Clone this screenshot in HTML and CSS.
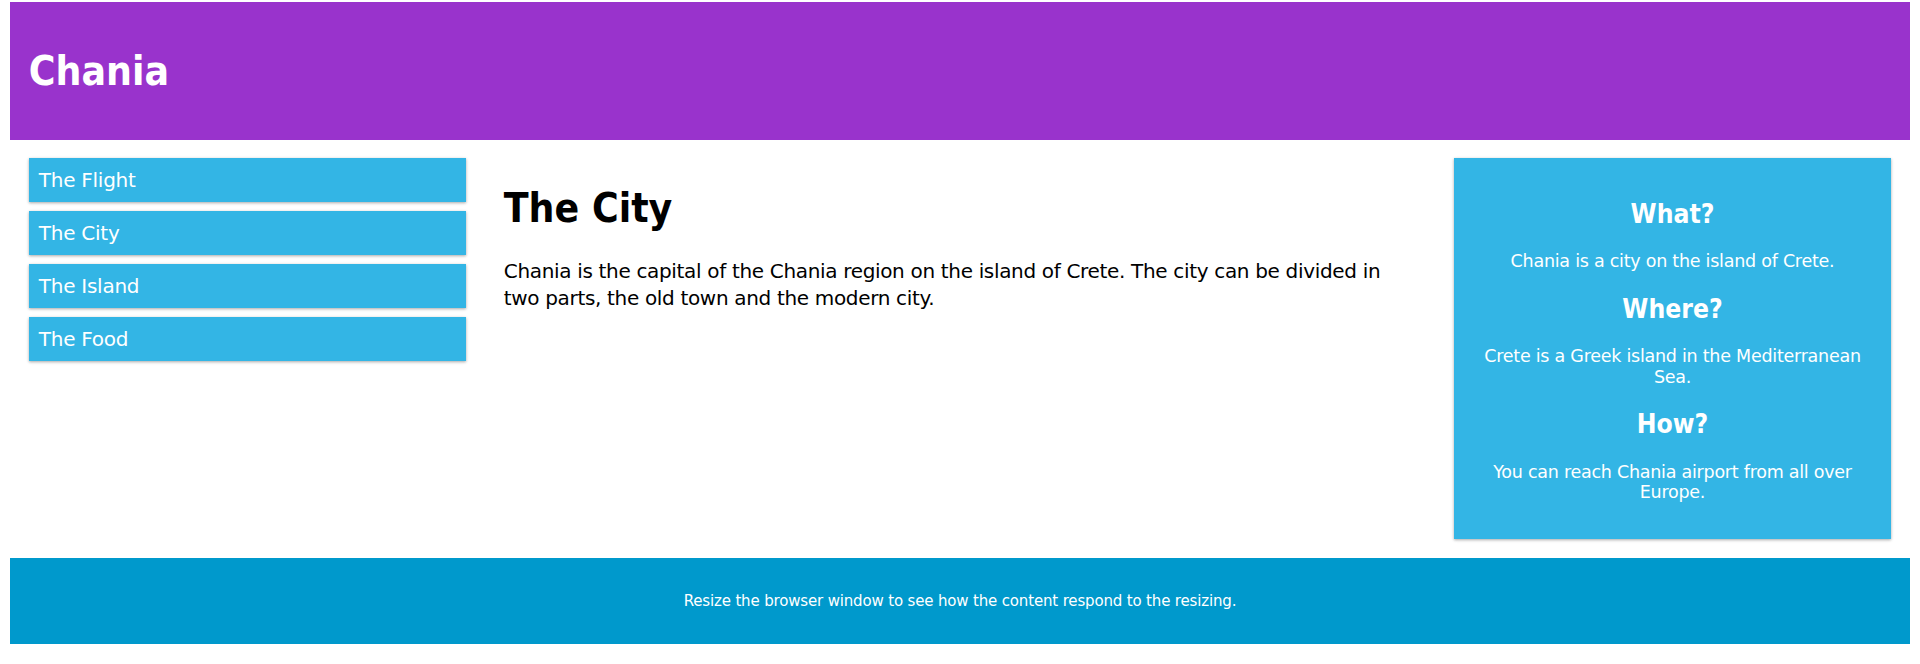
FILE: index.html
```html
<!DOCTYPE html>
<html lang="en">
<head>
<meta charset="utf-8">
<title>Chania</title>
<link rel="stylesheet" href="styles.css">
</head>
<body>
<div class="header">
  <h1>Chania</h1>
</div>
<div class="row">
  <div class="col-3 menu">
    <ul>
      <li>The Flight</li>
      <li>The City</li>
      <li>The Island</li>
      <li>The Food</li>
    </ul>
  </div>
  <div class="col-6 main">
    <h1>The City</h1>
    <p>Chania is the capital of the Chania region on the island of Crete. The city can be divided in two parts, the old town and the modern city.</p>
  </div>
  <div class="col-3 right">
    <div class="aside">
      <h2>What?</h2>
      <p>Chania is a city on the island of Crete.</p>
      <h2>Where?</h2>
      <p>Crete is a Greek island in the Mediterranean Sea.</p>
      <h2>How?</h2>
      <p>You can reach Chania airport from all over Europe.</p>
    </div>
  </div>
</div>
<div class="footer">
  <p>Resize the browser window to see how the content respond to the resizing.</p>
</div>
</body>
</html>
```
FILE: styles.css
```css
* {
  box-sizing: border-box;
}

html {
  font-family: "DejaVu Sans", "Liberation Sans", sans-serif;
  font-size: 20px;
}

body {
  margin: 2px 10px 10px;
  background: #ffffff;
}

h1, h2 {
  font-family: "DejaVu Sans Condensed", "DejaVu Sans", sans-serif;
  font-weight: bold;
}

.header {
  background-color: #9933cc;
  color: #ffffff;
  padding: 18.75px;
}

.header h1 {
  font-size: 40.5px;
  line-height: 46.5px;
  margin: 26.8px 0;
}

.row {
  display: flex;
  align-items: flex-start;
}

.col-3 {
  width: 25%;
  padding: 18.75px;
}

.col-6 {
  width: 50%;
  padding: 18.75px;
}

.menu ul {
  list-style-type: none;
  margin: 0;
  padding: 0;
}

.menu li {
  padding: 10px;
  margin-bottom: 8.75px;
  background-color: #33b5e5;
  color: #ffffff;
  letter-spacing: -0.25px;
  box-shadow: 0 1.25px 3.75px rgba(0, 0, 0, 0.12), 0 1.25px 2.5px rgba(0, 0, 0, 0.24);
}

.main h1 {
  font-size: 40.5px;
  line-height: 46.5px;
  margin: 26.8px 0;
  color: #000000;
}

.main p {
  margin: 20px 0;
  letter-spacing: -0.33px;
  line-height: 27px;
}

.aside {
  background-color: #33b5e5;
  padding: 18.75px;
  color: #ffffff;
  text-align: center;
  font-size: 17.5px;
  box-shadow: 0 1.25px 3.75px rgba(0, 0, 0, 0.12), 0 1.25px 2.5px rgba(0, 0, 0, 0.24);
}

.aside h2 {
  font-size: 26.25px;
  line-height: 30.5px;
  margin: 21.8px 0;
}

.aside p {
  margin: 17.5px 0;
  line-height: 20.75px;
  letter-spacing: -0.25px;
}

.footer {
  background-color: #0099cc;
  color: #ffffff;
  text-align: center;
  font-size: 15px;
  padding: 18.75px;
}

.footer p {
  margin: 15px 0;
  letter-spacing: -0.16px;
}
```
